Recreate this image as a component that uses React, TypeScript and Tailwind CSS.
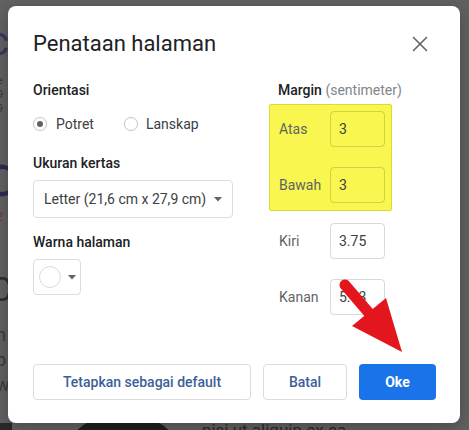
import React from "react";
import { X } from "lucide-react";

type MarginRowProps = {
  label: string;
  value: string;
};

function MarginRow({ label, value }: MarginRowProps) {
  return (
    <div className="flex items-center">
      <span className="w-[51px] text-[14px] leading-[20px] text-[#5f6368]">{label}</span>
      <div className="flex h-[36px] w-[55px] items-center rounded-[4px] border border-[rgba(0,0,0,0.15)] px-[8px] text-[14px] text-[#3c4043]">
        {value}
      </div>
    </div>
  );
}

function Caret() {
  return (
    <svg width="8" height="5" viewBox="0 0 8 5" className="shrink-0">
      <path d="M0 0 L8 0 L4 4.5 Z" fill="#5f6368" />
    </svg>
  );
}

export default function App() {
  return (
    <div className="relative h-[430px] w-[469px] overflow-hidden bg-[#616161] font-['Roboto',sans-serif]">
      {/* the document behind the dimmed overlay */}
      <div className="absolute left-[-12px] top-[22px] text-[40px] leading-[40px] text-[#3a3560]">c</div>
      <div className="absolute left-[-3px] top-[74px] text-[11px] leading-[14px] text-[#3a3a3a]">
        e<br />9<br />9
      </div>
      <div className="absolute left-[-14px] top-[146px] text-[60px] leading-[60px] text-[#2f2b52]">d</div>
      <div className="absolute left-[-4px] top-[208px] text-[12px] text-[#6a3a3a]">2</div>
      <div className="absolute left-[-10px] top-[272px] text-[34px] leading-[34px] text-[#2e2e2e]">C</div>
      <div className="absolute left-[-4px] top-[322px] text-[18px] leading-[25px] text-[#3a3a3a]">
        n<br />b<br />w
      </div>
      <div className="absolute bottom-[-30px] left-[70px] h-[40px] w-[106px] rounded-t-[30px] bg-[#1f1f1f]" />
      <div className="absolute left-0 top-[423px] h-[8px] w-[12px] bg-[#2a2a2a]" />
      <div className="absolute left-[202px] top-[420px] text-[17px] leading-[20px] text-[#2b2b2b]">nisi ut aliquip ex ea</div>

      {/* dialog */}
      <div className="absolute left-[8px] top-[6px] flex h-[417px] w-[452px] flex-col rounded-[8px] bg-white pb-[23px] pl-[25px] pr-[24px] pt-[23.5px] shadow-[0_4px_16px_rgba(0,0,0,0.25)]">
        <div className="flex h-[28px] items-center justify-between">
          <h2 className="text-[22px] leading-[28px] text-[#202124]">Penataan halaman</h2>
          <X size={26} strokeWidth={1.5} className="mr-[3.5px] text-[#5f6368]" />
        </div>

        <div className="mt-[22.5px] flex">
          {/* left column */}
          <div className="flex w-[236px] flex-col items-start">
            <div className="text-[14px] font-medium leading-[20px] text-[#202124]">Orientasi</div>
            <div className="mt-[14px] flex h-[20px] items-center text-[14px] text-[#3c4043]">
              <span className="flex h-[14px] w-[14px] items-center justify-center rounded-full border border-[#c4c7cb] shadow-[0_0_1px_rgba(0,0,0,0.15)]">
                <span className="h-[6px] w-[6px] rounded-full bg-[#5f6368]" />
              </span>
              <span className="ml-[9px]">Potret</span>
              <span className="ml-[30px] h-[14px] w-[14px] rounded-full border border-[#c4c7cb] shadow-[0_0_1px_rgba(0,0,0,0.15)]" />
              <span className="ml-[8px]">Lanskap</span>
            </div>
            <div className="mt-[19px] text-[14px] font-medium leading-[20px] text-[#202124]">Ukuran kertas</div>
            <div className="mt-[7px] flex h-[38px] items-center gap-[8px] rounded-[4px] border border-[#dadce0] pl-[10px] pr-[10px] text-[14px] text-[#3c4043]">
              <span>Letter (21,6 cm x 27,9 cm)</span>
              <Caret />
            </div>
            <div className="mt-[14px] text-[14px] font-medium leading-[20px] text-[#202124]">Warna halaman</div>
            <div className="mt-[7px] flex h-[36px] w-[48px] items-center rounded-[4px] border border-[#dadce0] pl-[5px]">
              <span className="h-[22px] w-[22px] rounded-full border border-[#dadce0]" />
              <span className="ml-[7px]">
                <Caret />
              </span>
            </div>
          </div>

          {/* right column */}
          <div className="flex flex-col">
            <div className="pl-[9px] text-[14px] leading-[20px]">
              <span className="font-medium text-[#202124]">Margin</span>{" "}
              <span className="text-[#80868b]">(sentimeter)</span>
            </div>
            <div className="mt-[4px] flex h-[107px] w-[123px] flex-col gap-[20px] rounded-[2px] border border-[#dcd83c] bg-[#f8f64f] pl-[9px] pt-[6px]">
              <MarginRow label="Atas" value="3" />
              <MarginRow label="Bawah" value="3" />
            </div>
            <div className="mt-[12px] flex flex-col gap-[20px] pl-[10px]">
              <MarginRow label="Kiri" value="3.75" />
              <MarginRow label="Kanan" value="5.93" />
            </div>
          </div>
        </div>

        <div className="mt-auto flex gap-[12px] text-[14px] font-medium">
          <button className="flex h-[36px] w-[218px] items-center justify-center rounded-[4px] border border-[#dadce0] text-[#3d5f99]">
            Tetapkan sebagai default
          </button>
          <button className="flex h-[36px] w-[84px] items-center justify-center rounded-[4px] border border-[#dadce0] text-[#3d5f99]">
            Batal
          </button>
          <button className="flex h-[36px] w-[77px] items-center justify-center rounded-[4px] bg-[#1a73e8] font-bold text-white">
            Oke
          </button>
        </div>
      </div>

      {/* red annotation arrow */}
      <svg className="pointer-events-none absolute left-0 top-0" width="469" height="430" viewBox="0 0 469 430">
        <line x1="345" y1="285" x2="369" y2="313" stroke="#e3161e" strokeWidth="11" strokeLinecap="round" />
        <polygon points="352,326 386,298 402,352" fill="#e3161e" />
      </svg>
    </div>
  );
}
